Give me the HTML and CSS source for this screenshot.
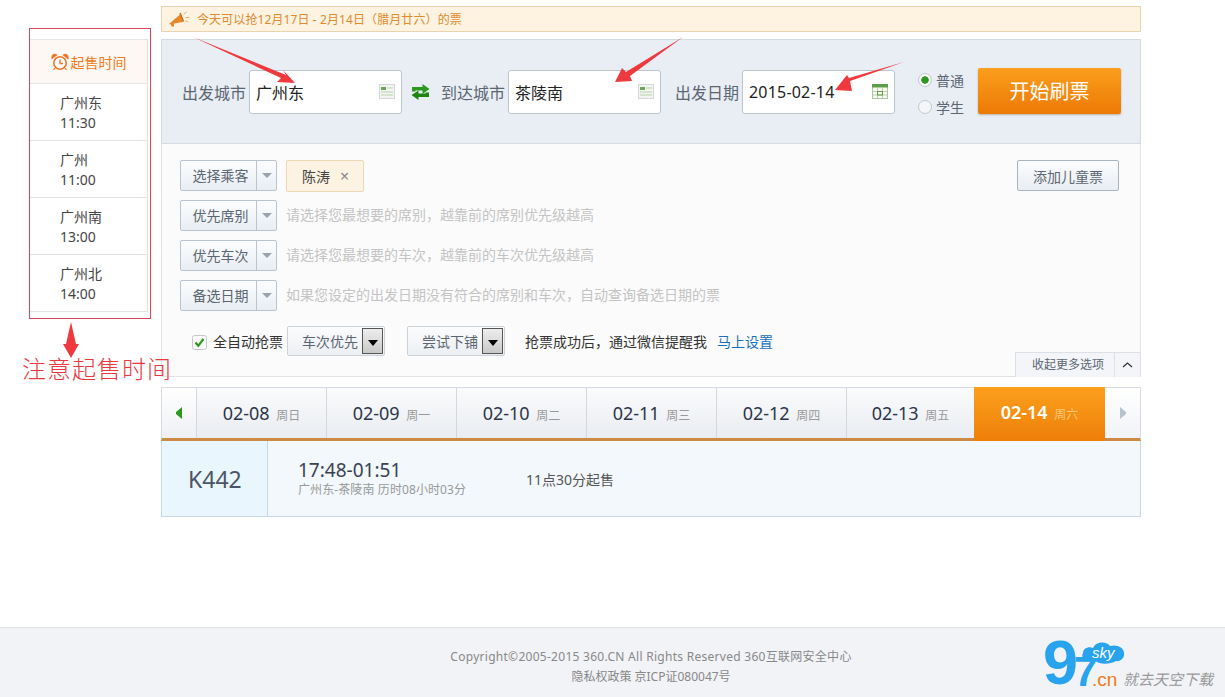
FILE: index.html
```html
<!DOCTYPE html>
<html lang="en">
<head>
<meta charset="UTF-8">
<meta name="viewport" content="width=device-width, initial-scale=1.0">
<title>360 Ticket</title>
<link rel="stylesheet" href="styles.css">
</head>
<body>

<div class="page">
  <!-- left column, sale times -->
  <div class="side">
    <div class="side-box">
      <div class="side-head">
        <svg class="clock" width="18" height="18" viewBox="0 0 18 18"><circle cx="9" cy="10" r="6.2" fill="#fff" stroke="#f0762a" stroke-width="1.6"/><path d="M9 6.5V10.5H12" fill="none" stroke="#f0762a" stroke-width="1.4"/><path d="M1 5.5C0.5 2.5 3 0.5 5.5 2ZM17 5.5C17.5 2.5 15 0.5 12.5 2ZM4 15L2.5 17M14 15L15.500 17" fill="#f0762a" stroke="#f0762a" stroke-width="1.2"/></svg>
        <span>起售时间</span>
      </div>
      <div class="side-row">广州东<br>11:30</div>
      <div class="side-row">广州<br>11:00</div>
      <div class="side-row">广州南<br>13:00</div>
      <div class="side-row">广州北<br>14:00</div>
    </div>
    <div class="side-note">注意起售时间</div>
  </div>

  <div class="main">
    <div class="notice">
      <svg width="22" height="17" viewBox="0 0 22 17"><path d="M1 13L12 3.500L15 11L6 12.500L6 15.500L3.500 15.500L3 13.500Z" fill="#e8862a"/><path d="M12 2L15.500 10.500" stroke="#c96a12" stroke-width="1.500"/><path d="M16 3L18.500 1M17.500 6.500H21M17.500 9.500L20 11" stroke="#f0b060" stroke-width="1"/></svg>
      <span>今天可以抢12月17日 - 2月14日（腊月廿六）的票</span>
    </div>

    <div class="search">
      <span class="search-label">出发城市</span>
      <div class="field">
        <span>广州东</span>
        <svg class="field-icon" width="16" height="15" viewBox="0 0 16 15"><rect x="0.5" y="0.5" width="15" height="14" fill="#f3f5f2" stroke="#d5d8d5"/><rect x="2" y="3" width="5" height="3" fill="#6fa35a"/><path d="M8 4H14M2 8H14M2 11H14" stroke="#b9d3ac"/></svg>
      </div>
      <svg class="swap" width="19" height="16" viewBox="0 0 19 16"><path d="M1 7.500V3H11.500V0L18.500 5L11.500 10V6.500H4.500V7.500Z" fill="#2b9a1c"/><path d="M18 8.500V13H7.500V16L0.500 11L7.500 6.500V9.500H14.500V8.500Z" fill="#1f8412"/></svg>
      <span class="search-label">到达城市</span>
      <div class="field">
        <span>茶陵南</span>
        <svg class="field-icon" width="16" height="15" viewBox="0 0 16 15"><rect x="0.5" y="0.500" width="15" height="14" fill="#f3f5f2" stroke="#d5d8d5"/><rect x="2" y="3" width="5" height="3" fill="#6fa35a"/><path d="M8 4H14M2 8H14M2 11H14" stroke="#b9d3ac"/></svg>
      </div>
      <span class="search-label search-label-date">出发日期</span>
      <div class="field">
        <span class="field-date">2015-02-14</span>
        <svg class="field-icon" width="16" height="15" viewBox="0 0 16 15"><rect x="0.5" y="0.500" width="15" height="14" fill="#fafbf8" stroke="#a9c79a"/><rect x="0" y="0" width="16" height="3.500" fill="#5f9e48"/><path d="M5.500 4V14M10.500 4V14M1 7.500H15M1 11H15" stroke="#b9d3ac"/><rect x="5.500" y="7.500" width="5" height="3.500" fill="none" stroke="#5f9e48"/></svg>
      </div>
      <div class="radios">
        <label class="radio"><i class="dot dot-on"></i>普通</label>
        <label class="radio"><i class="dot"></i>学生</label>
      </div>
      <button class="go">开始刷票</button>
    </div>

    <div class="options">
      <div class="opt-row">
        <div class="drop"><span>选择乘客</span><b></b></div>
        <div class="tag">陈涛<em>×</em></div>
        <button class="add-child">添加儿童票</button>
      </div>
      <div class="opt-row">
        <div class="drop"><span>优先席别</span><b></b></div>
        <span class="hint">请选择您最想要的席别，越靠前的席别优先级越高</span>
      </div>
      <div class="opt-row">
        <div class="drop"><span>优先车次</span><b></b></div>
        <span class="hint">请选择您最想要的车次，越靠前的车次优先级越高</span>
      </div>
      <div class="opt-row">
        <div class="drop"><span>备选日期</span><b></b></div>
        <span class="hint">如果您设定的出发日期没有符合的席别和车次，自动查询备选日期的票</span>
      </div>
      <div class="auto-row">
        <svg class="check" width="15" height="15" viewBox="0 0 15 15"><rect x="0.500" y="0.500" width="14" height="14" rx="2" fill="#fafafa" stroke="#c4c8cc"/><path d="M3.500 7.500L6.300 10.800L11.500 3.800" fill="none" stroke="#2b9a1c" stroke-width="2.200"/></svg>
        <span class="auto-label">全自动抢票</span>
        <div class="sel"><span>车次优先</span><b></b></div>
        <div class="sel sel-two"><span>尝试下铺</span><b></b></div>
        <span class="wechat">抢票成功后，通过微信提醒我</span>
        <a class="setup" href="#">马上设置</a>
      </div>
      <div class="collapse">
        <span>收起更多选项</span>
        <svg width="25" height="24" viewBox="0 0 25 24"><path d="M8 14L12.500 10L17 14" fill="none" stroke="#333" stroke-width="1.300"/></svg>
      </div>
    </div>

    <div class="dates">
      <div class="nav"><i class="arrow-left"></i></div>
      <div class="day">02-08 <small>周日</small></div>
      <div class="day">02-09 <small>周一</small></div>
      <div class="day">02-10 <small>周二</small></div>
      <div class="day">02-11 <small>周三</small></div>
      <div class="day">02-12 <small>周四</small></div>
      <div class="day">02-13 <small>周五</small></div>
      <div class="day day-on">02-14 <small>周六</small></div>
      <div class="nav nav-right"><i class="arrow-right"></i></div>
    </div>

    <div class="result">
      <div class="train">K442</div>
      <div class="times">
        <div class="clock-time">17:48-01:51</div>
        <div class="route">广州东-茶陵南 历时08小时03分</div>
      </div>
      <div class="sale">11点30分起售</div>
    </div>
  </div>
</div>

<div class="footer">
  <div class="footer-text">
    <div class="copy">Copyright©2005-2015 360.CN All Rights Reserved 360互联网安全中心</div>
    <div>隐私权政策 京ICP证080047号</div>
  </div>
  <svg class="logo" width="175" height="62" viewBox="0 0 175 62">
    <text x="-2" y="49.500" class="logo-num">9</text>
    <text x="29" y="52" class="logo-num logo-seven">7</text>
    <path d="M44 27C38 27 36 22 38 19C38 14 44 12 48 14C51 7 62 7 65 12C71 10 79 13 79 19C80 24 75 28 71 27C64 31 54 30 50 27C48 28 46 28 44 27Z" fill="#29a3ee"/>
    <text x="47" y="24" class="logo-sky">sky</text>
    <text x="47" y="52" class="logo-cn">.cn</text>
    <text x="78" y="51" class="logo-tag">就去天空下载</text>
  </svg>
</div>

<!-- red arrows drawn over the page -->
<svg class="marks" width="1225" height="697" viewBox="0 0 1225 697">
  <polygon points="193,37 286,75 283,70 295,83 277,82 281,78" fill="#ee3a3f"/>
  <polygon points="683,37 630,76 632,81 615,82 622,68 626,72" fill="#ee3a3f"/>
  <polygon points="904,62 850,81 852,91 835,90 847,75 849,78" fill="#ee3a3f"/>
  <polygon points="71,322 76,344 79,344 71,358 63,344 66,344" fill="#ee3a3f"/>
</svg>

</body>
</html>
```

FILE: styles.css
```css
* {
  box-sizing: border-box;
}
html, body {
  margin: 0;
  padding: 0;
}
body {
  min-height: 697px;
  display: flex;
  flex-direction: column;
  background: #fff;
  font-family: "Noto Sans", "Noto Sans CJK SC", sans-serif;
  font-size: 14px;
  color: #555;
  overflow: hidden;
}
.page {
  display: flex;
  padding-left: 29px;
  padding-top: 6px;
}

/* left column */
.side {
  position: relative;
  z-index: 2;
  width: 122px;
  margin-top: 22px;
}
.side-box {
  width: 122px;
  height: 291px;
  padding: 10px 2px 0 0;
  border: 1px solid #d9455a;
}
.side-head {
  height: 45px;
  display: flex;
  align-items: center;
  justify-content: center;
  gap: 2px;
  background: #fdf8f4;
  border-top: 1px solid #e6e6e6;
  border-bottom: 1px solid #e6e6e6;
  border-right: 1px solid #e6dcd0;
  color: #f07a21;
}
.side-row {
  height: 57px;
  padding: 9px 0 0 30px;
  line-height: 20px;
  color: #444;
  border-bottom: 1px solid #e3e3e3;
  border-right: 1px solid #e6dcd0;
}
.side-note {
  margin: 35px 0 0 -7px;
  width: 150px;
  font-size: 24px;
  font-weight: 300;
  line-height: 30px;
  letter-spacing: 1px;
  color: #e8393f;
  white-space: nowrap;
}

/* main column */
.main {
  width: 980px;
  margin-left: 10px;
}
.notice {
  height: 26px;
  display: flex;
  align-items: center;
  gap: 7px;
  padding-left: 6px;
  background: #fef3e0;
  border: 1px solid #e8d5b0;
  font-size: 12px;
  letter-spacing: 0.1px;
  color: #e08a2e;
}
.search {
  height: 105px;
  margin-top: 7px;
  display: flex;
  align-items: center;
  padding-left: 20px;
  background: #e9eef5;
  border: 1px solid #d5dbe3;
}
.search-label {
  width: 64px;
  margin-right: 3px;
  font-size: 16px;
  color: #5c6672;
  white-space: nowrap;
}
.search-label-date {
  margin-left: 14px;
}
.field {
  width: 153px;
  height: 44px;
  display: flex;
  align-items: center;
  justify-content: space-between;
  padding: 0 6px;
  background: #fff;
  border: 1px solid #bcc5d0;
  border-radius: 3px;
  font-size: 16px;
  color: #222;
}
.field-date {
  letter-spacing: 0.2px;
}
.swap {
  margin: 0 11px 0 9px;
}
.radios {
  margin: 4px 0 0 23px;
  width: 60px;
}
.radio {
  height: 27px;
  display: flex;
  align-items: center;
  gap: 4px;
  color: #5c6672;
}
.dot {
  width: 14px;
  height: 14px;
  display: block;
  border: 1px solid #c3c9d0;
  border-radius: 50%;
  background: #f4f6f8;
}
.dot-on {
  background: radial-gradient(circle, #2b9a1c 0, #2b9a1c 3.4px, #f8faf8 4px);
}
.go {
  width: 143px;
  height: 46px;
  margin-top: -1px;
  padding: 0 0 2px;
  border: 0;
  border-radius: 2px;
  background: linear-gradient(#fc9e1d, #ec7a06);
  box-shadow: 0 1px 2px rgba(120, 90, 50, 0.4);
  font-family: inherit;
  font-size: 20px;
  color: #fff;
}

/* options */
.options {
  position: relative;
  height: 233px;
  padding: 16px 21px 0 18px;
  background: #fbfbfb;
  border: 1px solid #e1e3e6;
  border-top: 0;
}
.opt-row {
  height: 31px;
  margin-bottom: 9px;
  display: flex;
  align-items: center;
}
.drop {
  width: 97px;
  height: 31px;
  display: flex;
  background: linear-gradient(#fbfcfd, #e9eef3);
  border: 1px solid #bac4d0;
  border-radius: 2px;
}
.drop span {
  width: 76px;
  padding-left: 4px;
  line-height: 29px;
  text-align: center;
  border-right: 1px solid #bac4d0;
  color: #5c6672;
}
.drop b {
  margin: 12px 0 0 5px;
  width: 0;
  height: 0;
  border: 5px solid transparent;
  border-top-color: #9aa3ad;
}
.tag {
  width: 78px;
  height: 32px;
  margin-left: 9px;
  padding-left: 15px;
  line-height: 30px;
  background: #fdf3e2;
  border: 1px solid #ecd9b4;
  border-radius: 2px;
  color: #444;
}
.tag em {
  margin-left: 10px;
  font-style: normal;
  font-size: 16px;
  color: #888;
}
.add-child {
  width: 102px;
  height: 31px;
  margin-left: auto;
  padding: 0;
  background: linear-gradient(#fbfcfd, #e9eef3);
  border: 1px solid #aab4c0;
  border-radius: 2px;
  font-family: inherit;
  font-size: 14px;
  color: #5c6672;
}
.hint {
  margin: -4px 0 0 9px;
  color: #c4c4c4;
}
.auto-row {
  height: 30px;
  margin-top: 15px;
  display: flex;
  align-items: center;
  padding-left: 12px;
  color: #333;
}
.check {
  margin-top: 2px;
}
.auto-label {
  margin-left: 6px;
  width: 74px;
  white-space: nowrap;
}
.sel {
  width: 98px;
  height: 30px;
  display: flex;
  align-items: center;
  justify-content: space-between;
  padding: 0 1px 0 14px;
  background: linear-gradient(#fbfcfd, #eceff3);
  border: 1px solid #ccd2d8;
  border-radius: 2px;
  color: #5c6672;
}
.sel b {
  width: 21px;
  height: 26px;
  display: flex;
  align-items: center;
  justify-content: center;
  background: linear-gradient(#eee, #c9c9c9);
  border: 1px solid #555;
}
.sel b::after {
  content: "";
  margin-top: 3px;
  border: 5px solid transparent;
  border-top: 6px solid #000;
  border-bottom: 0;
}
.sel-two {
  margin-left: 22px;
}
.wechat {
  margin-left: 20px;
  color: #333;
}
.setup {
  margin-left: 10px;
  color: #1a6fbd;
  text-decoration: none;
}
.collapse {
  position: absolute;
  right: -1px;
  bottom: -1px;
  width: 126px;
  height: 25px;
  display: flex;
  justify-content: space-between;
  background: #f3f5f8;
  border: 1px solid #dde1e6;
  border-bottom: 0;
  font-size: 12px;
  line-height: 24px;
  color: #5c6672;
}
.collapse span {
  flex: 1;
  padding-left: 16px;
  border-right: 1px solid #dde1e6;
}

/* date tabs */
.dates {
  height: 54px;
  margin-top: 10px;
  display: grid;
  grid-template-columns: 34px repeat(5, 130px) 128px 131px 1fr;
  background: linear-gradient(#fafbfc, #e9ecf1);
  border: 1px solid #d8dce2;
  border-bottom: 3px solid #cc8a45;
}
.nav {
  display: flex;
  align-items: center;
  justify-content: center;
  background: linear-gradient(#fff, #eef0f4);
}
.nav-right {
  background: linear-gradient(#fff, #f1f3f6);
}
.arrow-left {
  border: 5px solid transparent;
  border-right: 6px solid #2b9a1c;
  border-left: 0;
  height: 12px;
}
.arrow-right {
  border: 5px solid transparent;
  border-left: 6px solid #b7c2ce;
  border-right: 0;
  height: 12px;
}
.day {
  padding-top: 13px;
  text-align: center;
  font-size: 18px;
  line-height: 24px;
  color: #2c3648;
  border-left: 1px solid #d4d8de;
}
.day small {
  margin-left: 2px;
  font-size: 12px;
  color: #999;
}
.day-on {
  margin: -1px 0 -3px;
  padding-top: 13px;
  background: linear-gradient(#fca01c, #ee7f0a);
  border-left: 0;
  font-weight: 600;
  color: #fff;
}
.day-on small {
  font-weight: normal;
  color: #ffc879;
}

/* result row */
.result {
  height: 76px;
  display: flex;
  background: #f2f8fc;
  border: 1px solid #c8d8e2;
  border-top: 0;
}
.train {
  width: 106px;
  padding-left: 26px;
  font-size: 23px;
  line-height: 76px;
  color: #4a5568;
  background: #eaf6fd;
  border-right: 1px solid #c8d8e2;
}
.times {
  width: 228px;
  padding: 17px 0 0 30px;
}
.clock-time {
  font-size: 19px;
  line-height: 24px;
  color: #3a4252;
}
.route {
  font-size: 12px;
  line-height: 16px;
  letter-spacing: 0.1px;
  color: #999;
}
.sale {
  margin-left: 30px;
  line-height: 76px;
  margin-top: 1px;
  color: #555;
}

/* footer */
.footer {
  height: 70px;
  margin-top: auto;
  display: flex;
  padding: 19px 0 0 161px;
  background: #f2f3f7;
  border-top: 1px solid #e3e3e3;
  font-size: 12px;
  line-height: 20px;
  color: #888;
}
.footer-text {
  width: 980px;
  text-align: center;
}
.copy {
  letter-spacing: 0.28px;
}
.logo {
  margin: -13px 0 0 -96px;
  overflow: visible;
}
.logo-num {
  font-family: "Liberation Sans", sans-serif;
  font-size: 63px;
  font-weight: bold;
  fill: #29a3ee;
}
.logo-seven {
  font-size: 42px;
}
.logo-sky {
  font-family: "Liberation Sans", sans-serif;
  font-size: 15px;
  font-style: italic;
  fill: #fff;
}
.logo-cn {
  font-family: "Liberation Sans", sans-serif;
  font-size: 19px;
  fill: #f07a21;
}
.logo-tag {
  font-size: 15px;
  font-style: italic;
  fill: #999;
}

.marks {
  position: absolute;
  z-index: 3;
  left: 0;
  top: 0;
  pointer-events: none;
}
```
